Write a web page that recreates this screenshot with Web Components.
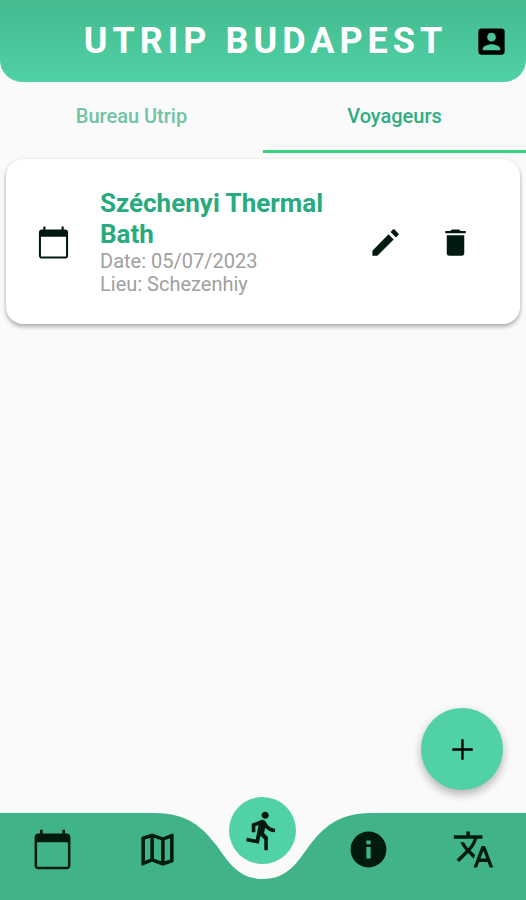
<!DOCTYPE html>
<html lang="fr">
<head>
<meta charset="utf-8">
<meta name="viewport" content="width=device-width, initial-scale=1">
<title>Utrip Budapest</title>
<style>
html {
    --header-top: #44ba8f;
    --header-bottom: #50d1a6;
    --bar: #40b488;
    --accent: #50d1a6;
    --green: #27ab7e;
    --ink: #001a10;
}

body {
    margin: 0;
    min-height: 100vh;
    display: flex;
    flex-direction: column;
    background: #fafafa;
    font-family: Roboto, "Liberation Sans", sans-serif;
}

main {
    flex: 1;
    display: flex;
    flex-direction: column;
    padding: 6px 6px 7px;
}

fab-button {
    margin: auto 17px 0 auto;
}
</style>
</head>
<body>
<app-header>
    Utrip Budapest
    <app-icon slot="action" name="account"></app-icon>
</app-header>
<tab-bar>
    <tab-item>Bureau Utrip</tab-item>
    <tab-item selected>Voyageurs</tab-item>
</tab-bar>
<main>
    <event-card>
        <span slot="title">Széchenyi Thermal Bath</span>
        <span slot="date">Date: 05/07/2023</span>
        <span slot="place">Lieu: Schezenhiy</span>
    </event-card>
    <fab-button></fab-button>
</main>
<bottom-nav>
    <nav-item icon="calendar" label="Calendrier"></nav-item>
    <nav-item icon="map" label="Carte"></nav-item>
    <nav-item icon="run" label="Activités" active></nav-item>
    <nav-item icon="info" label="Informations"></nav-item>
    <nav-item icon="translate" label="Langue"></nav-item>
</bottom-nav>

<script>
// All the icons are on a 24x24 grid
const ICONS = {
    account: "M3 5v14c0 1.1.89 2 2 2h14c1.1 0 2-.9 2-2V5c0-1.1-.9-2-2-2H5c-1.11 0-2 .9-2 2zm12 4c0 1.66-1.34 3-3 3s-3-1.34-3-3 1.34-3 3-3 3 1.34 3 3zm-9 8c0-2 4-3.1 6-3.1s6 1.1 6 3.1v1H6v-1z",
    calendar: "M20 3h-1V1h-1.5v2h-11V1H5v2H4c-1.1 0-2 .9-2 2v16c0 1.1.9 2 2 2h16c1.1 0 2-.9 2-2V5c0-1.1-.9-2-2-2zm.6 18.6H3.4V8h17.2v13.6z",
    edit: "M3 17.6V21h3.4L17.6 9.9l-3.5-3.5L3 17.6zM20.71 7.04c.39-.39.39-1.02 0-1.41l-2.34-2.34c-.39-.39-1.02-.39-1.41 0l-1.5 1.5 3.75 3.75 1.5-1.5z",
    trash: "M6 19.4c0 1 .7 1.6 1.6 1.6h8.8c.9 0 1.6-.6 1.6-1.6V7H6v12.4zM19 4.1h-3.5L14.5 3h-5l-1 1.1H5v1.6h14V4.1z",
    plus: "M19 12.8h-6.2V19h-1.6v-6.2H5v-1.6h6.2V5h1.6v6.2H19v1.6z",
    map: "M20.5 3l-.16.03L15 5.1 9 3 3.36 4.9c-.21.07-.36.25-.36.48V20.5c0 .28.22.5.5.5l.16-.03L9 18.9l6 2.1 5.64-1.9c.21-.07.36-.25.36-.48V3.5c0-.28-.22-.5-.5-.5zM10 5.47l4 1.4v11.66l-4-1.4V5.47zm-5 .99l3-1.01v11.7l-3 1.16V6.46zm14 11.08l-3 1.01V6.86l3-1.16v11.84z",
    run: "M13.49 5.48c1.1 0 2-.9 2-2s-.9-2-2-2-2 .9-2 2 .9 2 2 2zm-3.6 13.9l1-4.4 2.1 2v6h2v-7.5l-2.1-2 .6-3c1.3 1.5 3.3 2.5 5.5 2.5v-2c-1.9 0-3.5-1-4.3-2.4l-1-1.6c-.4-.6-1-1-1.7-1-.3 0-.5.1-.8.1l-5.2 2.2v4.7h2v-3.4l1.8-.7-1.6 8.1-4.9-1-.4 2 7 1.4z",
    info: "M12 2C6.48 2 2 6.48 2 12s4.48 10 10 10 10-4.48 10-10S17.52 2 12 2zm1.2 15h-2.4v-6.4h2.4V17zm0-8h-2.4V7h2.4v2z",
    translate: "M12.87 15.07l-2.54-2.51.03-.03c1.74-1.94 2.98-4.17 3.71-6.53H17V4h-7V2H8v2H1v1.99h11.17C11.5 7.92 10.44 9.75 9 11.35 8.07 10.32 7.3 9.19 6.69 8h-2c.73 1.63 1.73 3.17 2.98 4.56l-5.09 5.02L4 19l5-5 3.11 3.11.76-2.04zM18.5 10h-2L12 22h2l1.12-3h4.75L21 22h2l-4.5-12zm-2.62 7l1.62-4.33L19.12 17h-3.24z"
};

class BaseElement extends HTMLElement {
    constructor() {
        super();
        const template = document.createElement("template");
        template.innerHTML = this.constructor.templateString;
        this.attachShadow({ mode: "open" });
        this.shadowRoot.appendChild(template.content.cloneNode(true));
    }
}

class AppIcon extends BaseElement {
    static templateString = `
<style>
:host {
    display: block;
    width: var(--icon-size, 35px);
    height: var(--icon-size, 35px);
}

svg {
    display: block;
    width: 100%;
    height: 100%;
    fill: currentColor;
}
</style>
<svg viewBox="0 0 24 24" aria-hidden="true"><path/></svg>
`;

    connectedCallback(){
        const path = this.shadowRoot.querySelector("path");
        path.setAttribute("d", ICONS[this.getAttribute("name")]);
    }
}

class AppHeader extends BaseElement {
    static templateString = `
<style>
:host {
    display: block;
}

header {
    display: grid;
    grid-template-columns: 35px 1fr 35px;
    align-items: center;
    height: 82px;
    padding: 0 17px;
    border-radius: 0 0 22px 22px;
    background: linear-gradient(var(--header-top), var(--header-bottom));
}

/* the left padding balances the spacing after the last letter */
h1 {
    grid-column: 2;
    margin: 0;
    padding-left: 5px;
    font-size: 36px;
    line-height: 42px;
    font-weight: 700;
    letter-spacing: 5px;
    text-align: center;
    text-transform: uppercase;
    white-space: nowrap;
    color: #fff;
}

button {
    padding: 0;
    border: 0;
    background: none;
    color: #000;
}
</style>
<header>
    <h1><slot></slot></h1>
    <button type="button" aria-label="Compte"><slot name="action"></slot></button>
</header>
`;
}

class TabBar extends BaseElement {
    static templateString = `
<style>
:host {
    display: grid;
    grid-auto-flow: column;
    grid-auto-columns: 1fr;
}
</style>
<slot></slot>
`;

    connectedCallback(){
        this.setAttribute("role", "tablist");
    }
}

class TabItem extends BaseElement {
    static templateString = `
<style>
:host {
    display: block;
}

button {
    display: block;
    width: 100%;
    height: 71px;
    padding: 0;
    border: 0;
    border-bottom: 3px solid transparent;
    background: none;
    font: 500 20px/24px Roboto, "Liberation Sans", sans-serif;
    color: #70c4a3;
}

:host([selected]) button {
    border-bottom-color: #36d47c;
    color: #30ad82;
}
</style>
<button type="button" role="tab"><slot></slot></button>
`;

    connectedCallback(){
        const button = this.shadowRoot.querySelector("button");
        button.setAttribute("aria-selected", this.hasAttribute("selected"));
    }
}

class EventCard extends BaseElement {
    static templateString = `
<style>
:host {
    display: block;
}

article {
    display: flex;
    align-items: center;
    gap: 29px;
    padding: 29px 47px 28px 30px;
    border-radius: 17px;
    background: #fff;
    color: var(--ink);
    box-shadow: 0 3px 4px rgba(0, 0, 0, .24), 0 1px 4px rgba(0, 0, 0, .12);
}

.text {
    flex: 1;
    font-size: 20px;
    line-height: 23px;
    color: #a0a0a0;
}

h2, p {
    margin: 0;
}

h2 {
    font-size: 26px;
    line-height: 31px;
    font-weight: 700;
    color: var(--green);
}

.actions {
    display: flex;
    gap: 35px;
}

button {
    padding: 0;
    border: 0;
    background: none;
    color: inherit;
}
</style>
<article>
    <app-icon name="calendar"></app-icon>
    <div class="text">
        <h2><slot name="title"></slot></h2>
        <p><slot name="date"></slot></p>
        <p><slot name="place"></slot></p>
    </div>
    <div class="actions">
        <button type="button" aria-label="Modifier"><app-icon name="edit"></app-icon></button>
        <button type="button" aria-label="Supprimer"><app-icon name="trash"></app-icon></button>
    </div>
</article>
`;
}

class FabButton extends BaseElement {
    static templateString = `
<style>
:host {
    display: block;
}

button {
    display: grid;
    place-items: center;
    width: 82px;
    height: 82px;
    padding: 0;
    border: 0;
    border-radius: 50%;
    background: var(--accent);
    color: #000;
    box-shadow: 0 5px 8px rgba(0, 0, 0, .22), 0 2px 12px rgba(0, 0, 0, .08);
}
</style>
<button type="button" aria-label="Ajouter"><app-icon name="plus"></app-icon></button>
`;
}

// The bar and the items share one grid cell, so the round item rises above the bar
class BottomNav extends BaseElement {
    static templateString = `
<style>
:host {
    display: grid;
    grid-template-rows: 103px;
}

.bar, nav {
    grid-area: 1 / 1;
}

.bar {
    display: flex;
    align-self: end;
    height: 87px;
}

.side {
    flex: 1;
    background: var(--bar);
}

svg {
    display: block;
    width: 216px;
    height: 87px;
    fill: var(--bar);
}

nav {
    display: grid;
    grid-auto-flow: column;
    grid-auto-columns: 1fr;
}
</style>
<div class="bar">
    <div class="side"></div>
    <svg viewBox="0 0 216 87" aria-hidden="true">
        <path d="M0 0C33 0 48 15 62 33C74 50 84 66 108 66C132 66 142 50 154 33C168 15 183 0 216 0V87H0Z"/>
    </svg>
    <div class="side"></div>
</div>
<nav><slot></slot></nav>
`;
}

class NavItem extends BaseElement {
    static templateString = `
<style>
:host {
    display: flex;
    justify-content: center;
    align-items: flex-start;
    --icon-size: 43px;
}

a {
    display: grid;
    place-items: center;
    margin-top: 19px;
    width: 67px;
    height: 67px;
    border-radius: 50%;
    color: var(--ink);
}

:host([active]) a {
    margin-top: 0;
    background: var(--accent);
}
</style>
<a href="#"><app-icon></app-icon></a>
`;

    constructor() {
        super();
        this.shadowRoot.querySelector("app-icon").setAttribute("name", this.getAttribute("icon"));
    }

    connectedCallback(){
        this.shadowRoot.querySelector("a").setAttribute("aria-label", this.getAttribute("label"));
    }
}

window.customElements.define("app-header", AppHeader);
window.customElements.define("tab-bar", TabBar);
window.customElements.define("tab-item", TabItem);
window.customElements.define("event-card", EventCard);
window.customElements.define("fab-button", FabButton);
window.customElements.define("bottom-nav", BottomNav);
window.customElements.define("nav-item", NavItem);
window.customElements.define("app-icon", AppIcon);
</script>
</body>
</html>
